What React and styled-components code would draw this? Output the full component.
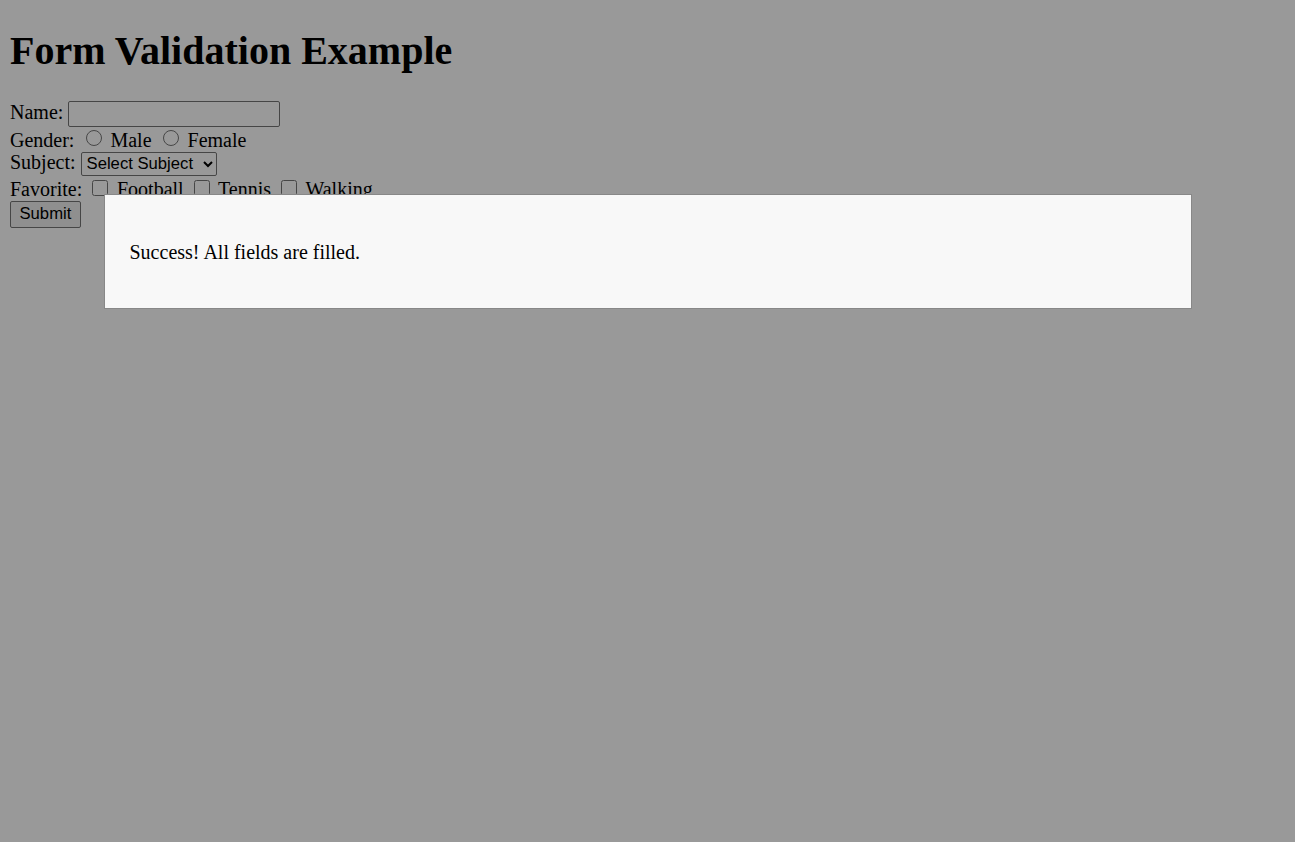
import * as React from "react";
import styled, { createGlobalStyle } from "styled-components";

const GlobalStyle = createGlobalStyle`
  body {
    margin: 0 10px 10px;
    background: #ffffff;
    color: #000000;
    font-family: "Liberation Serif", "Times New Roman", serif;
    font-size: 20px;
  }
`;

const Title = styled.h1`
  font-size: 40px;
  font-weight: bold;
  margin: 26.8px 0;
`;

const Row = styled.div`
  line-height: normal;
`;

const TextInput = styled.input`
  box-sizing: border-box;
  width: 212px;
  height: 26px;
  margin: 0;
  padding: 1px 2px;
  border: 1px solid #767676;
  border-radius: 2px;
  background: #ffffff;
  font-family: "Liberation Sans", Arial, sans-serif;
  font-size: 16.67px;
`;

// radios and checkboxes keep Chrome's default margins, scaled by 1.25
const Choice = styled.input`
  width: 16px;
  height: 16px;
  margin: ${ ({ type }) => (type === "checkbox" ? "3.75px 3.75px 3.75px 5px" : "3.75px 3.75px 0 6.25px") };
  vertical-align: baseline;
`;

const Select = styled.select`
  box-sizing: border-box;
  width: 136px;
  height: 24px;
  margin: 0;
  padding: 0 1px;
  border: 1px solid #767676;
  border-radius: 2px;
  background: #ffffff;
  color: #000000;
  font-family: "Liberation Sans", Arial, sans-serif;
  font-size: 16.67px;
`;

const SubmitButton = styled.button`
  box-sizing: border-box;
  height: 27px;
  margin: 0;
  padding: 1px 8.5px;
  border: 1px solid #767676;
  border-radius: 2px;
  background: #efefef;
  color: #000000;
  font-family: "Liberation Sans", Arial, sans-serif;
  font-size: 16.67px;
`;

const Overlay = styled.div`
  position: fixed;
  inset: 0;
  background: rgba(0, 0, 0, 0.4);
  overflow: auto;
`;

const ModalContent = styled.div`
  width: 80%;
  margin: 15% auto;
  padding: 25px;
  border: 1px solid #888888;
  background: #f8f8f8;
`;

const Message = styled.p`
  margin: 21px 0 19px;
  font-size: 20px;
`;

const App = () => {
  const [form, setForm] = React.useState({ name: "", gender: "", subject: "" });
  const [open, setOpen] = React.useState(true);

  return (
    <>
      <GlobalStyle />
      <Title>Form Validation Example</Title>
      <form onSubmit={ (e) => { e.preventDefault(); setOpen(true); } }>
        <Row>
          Name: <TextInput
            type="text"
            value={ form.name }
            onChange={ (e) => setForm({ ...form, name: e.target.value }) }
          />
        </Row>
        <Row>
          Gender: <Choice type="radio" name="gender" value="male" /> Male <Choice type="radio" name="gender" value="female" /> Female
        </Row>
        <Row>
          Subject: <Select
            value={ form.subject }
            onChange={ (e) => setForm({ ...form, subject: e.target.value }) }
          >
            <option value="">Select Subject</option>
            <option value="math">Math</option>
            <option value="science">Science</option>
            <option value="english">English</option>
          </Select>
        </Row>
        <Row>
          Favorite: <Choice type="checkbox" /> Football <Choice type="checkbox" /> Tennis <Choice type="checkbox" /> Walking
        </Row>
        <SubmitButton type="submit">Submit</SubmitButton>
      </form>
      { open && (
        <Overlay onClick={ () => setOpen(false) }>
          <ModalContent onClick={ (e) => e.stopPropagation() }>
            <Message>Success! All fields are filled.</Message>
          </ModalContent>
        </Overlay>
      ) }
    </>
  );
};

export default App;
